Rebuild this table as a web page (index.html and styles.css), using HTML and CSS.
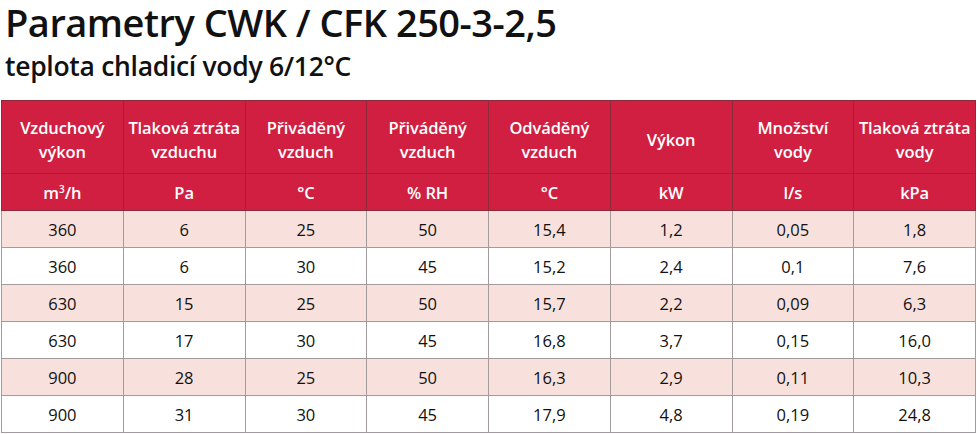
FILE: index.html
```html
<!DOCTYPE html>
<html lang="cs">
<head>
<meta charset="utf-8">
<title>Parametry CWK / CFK 250-3-2,5</title>
<link rel="stylesheet" href="styles.css">
</head>
<body>
<header class="titles">
  <h1 class="title">Parametry CWK / CFK 250-3-2,5</h1>
  <h2 class="subtitle">teplota chladicí vody 6/12°C</h2>
</header>
<table class="params">
  <thead>
    <tr class="head-names">
      <th>Vzduchový<br>výkon</th>
      <th>Tlaková ztráta<br>vzduchu</th>
      <th>Přiváděný<br>vzduch</th>
      <th>Přiváděný<br>vzduch</th>
      <th>Odváděný<br>vzduch</th>
      <th>Výkon</th>
      <th>Množství<br>vody</th>
      <th>Tlaková ztráta<br>vody</th>
    </tr>
    <tr class="head-units">
      <th>m<sup>3</sup>/h</th>
      <th>Pa</th>
      <th>°C</th>
      <th>% RH</th>
      <th>°C</th>
      <th>kW</th>
      <th>l/s</th>
      <th>kPa</th>
    </tr>
  </thead>
  <tbody>
    <tr class="shade"><td>360</td><td>6</td><td>25</td><td>50</td><td>15,4</td><td>1,2</td><td>0,05</td><td>1,8</td></tr>
    <tr><td>360</td><td>6</td><td>30</td><td>45</td><td>15,2</td><td>2,4</td><td>0,1</td><td>7,6</td></tr>
    <tr class="shade"><td>630</td><td>15</td><td>25</td><td>50</td><td>15,7</td><td>2,2</td><td>0,09</td><td>6,3</td></tr>
    <tr><td>630</td><td>17</td><td>30</td><td>45</td><td>16,8</td><td>3,7</td><td>0,15</td><td>16,0</td></tr>
    <tr class="shade"><td>900</td><td>28</td><td>25</td><td>50</td><td>16,3</td><td>2,9</td><td>0,11</td><td>10,3</td></tr>
    <tr><td>900</td><td>31</td><td>30</td><td>45</td><td>17,9</td><td>4,8</td><td>0,19</td><td>24,8</td></tr>
  </tbody>
</table>
</body>
</html>
```
FILE: styles.css
```css
html, body {
  margin: 0;
  padding: 0;
  background: #ffffff;
}
body {
  font-family: "Open Sans", "Noto Sans", sans-serif;
  color: #111111;
}
.titles {
  padding: 0 0 0 5px;
  height: 100px;
}
.title {
  margin: 0;
  font-size: 38px;
  font-weight: 600;
  line-height: 44px;
  letter-spacing: -0.5px;
  color: #111;
}
.subtitle {
  margin: 0;
  font-size: 26.5px;
  font-weight: 600;
  line-height: 44px;
  letter-spacing: -0.3px;
  color: #111;
}
.params {
  margin-left: 1px;
  width: 975px;
  border-collapse: collapse;
  table-layout: fixed;
  border: 1px solid #9a9496;
}
.params th,
.params td {
  text-align: center;
  padding: 0;
}
.params th {
  background: #d01f41;
  color: #ffffff;
  font-weight: 600;
  font-size: 16.5px;
  letter-spacing: -0.1px;
  border: 1px solid #8e2a3b;
}
.head-names th {
  height: 67px;
  padding-top: 5px;
  line-height: 24px;
}
.head-units th {
  height: 36px;
}
.head-units sup {
  font-size: 10px;
  line-height: 0;
}
.params td {
  height: 36px;
  font-size: 16.5px;
  color: #111;
  border: 1px solid #a39a9b;
}
.params tr.shade td {
  background: #f8e1dd;
}
```
